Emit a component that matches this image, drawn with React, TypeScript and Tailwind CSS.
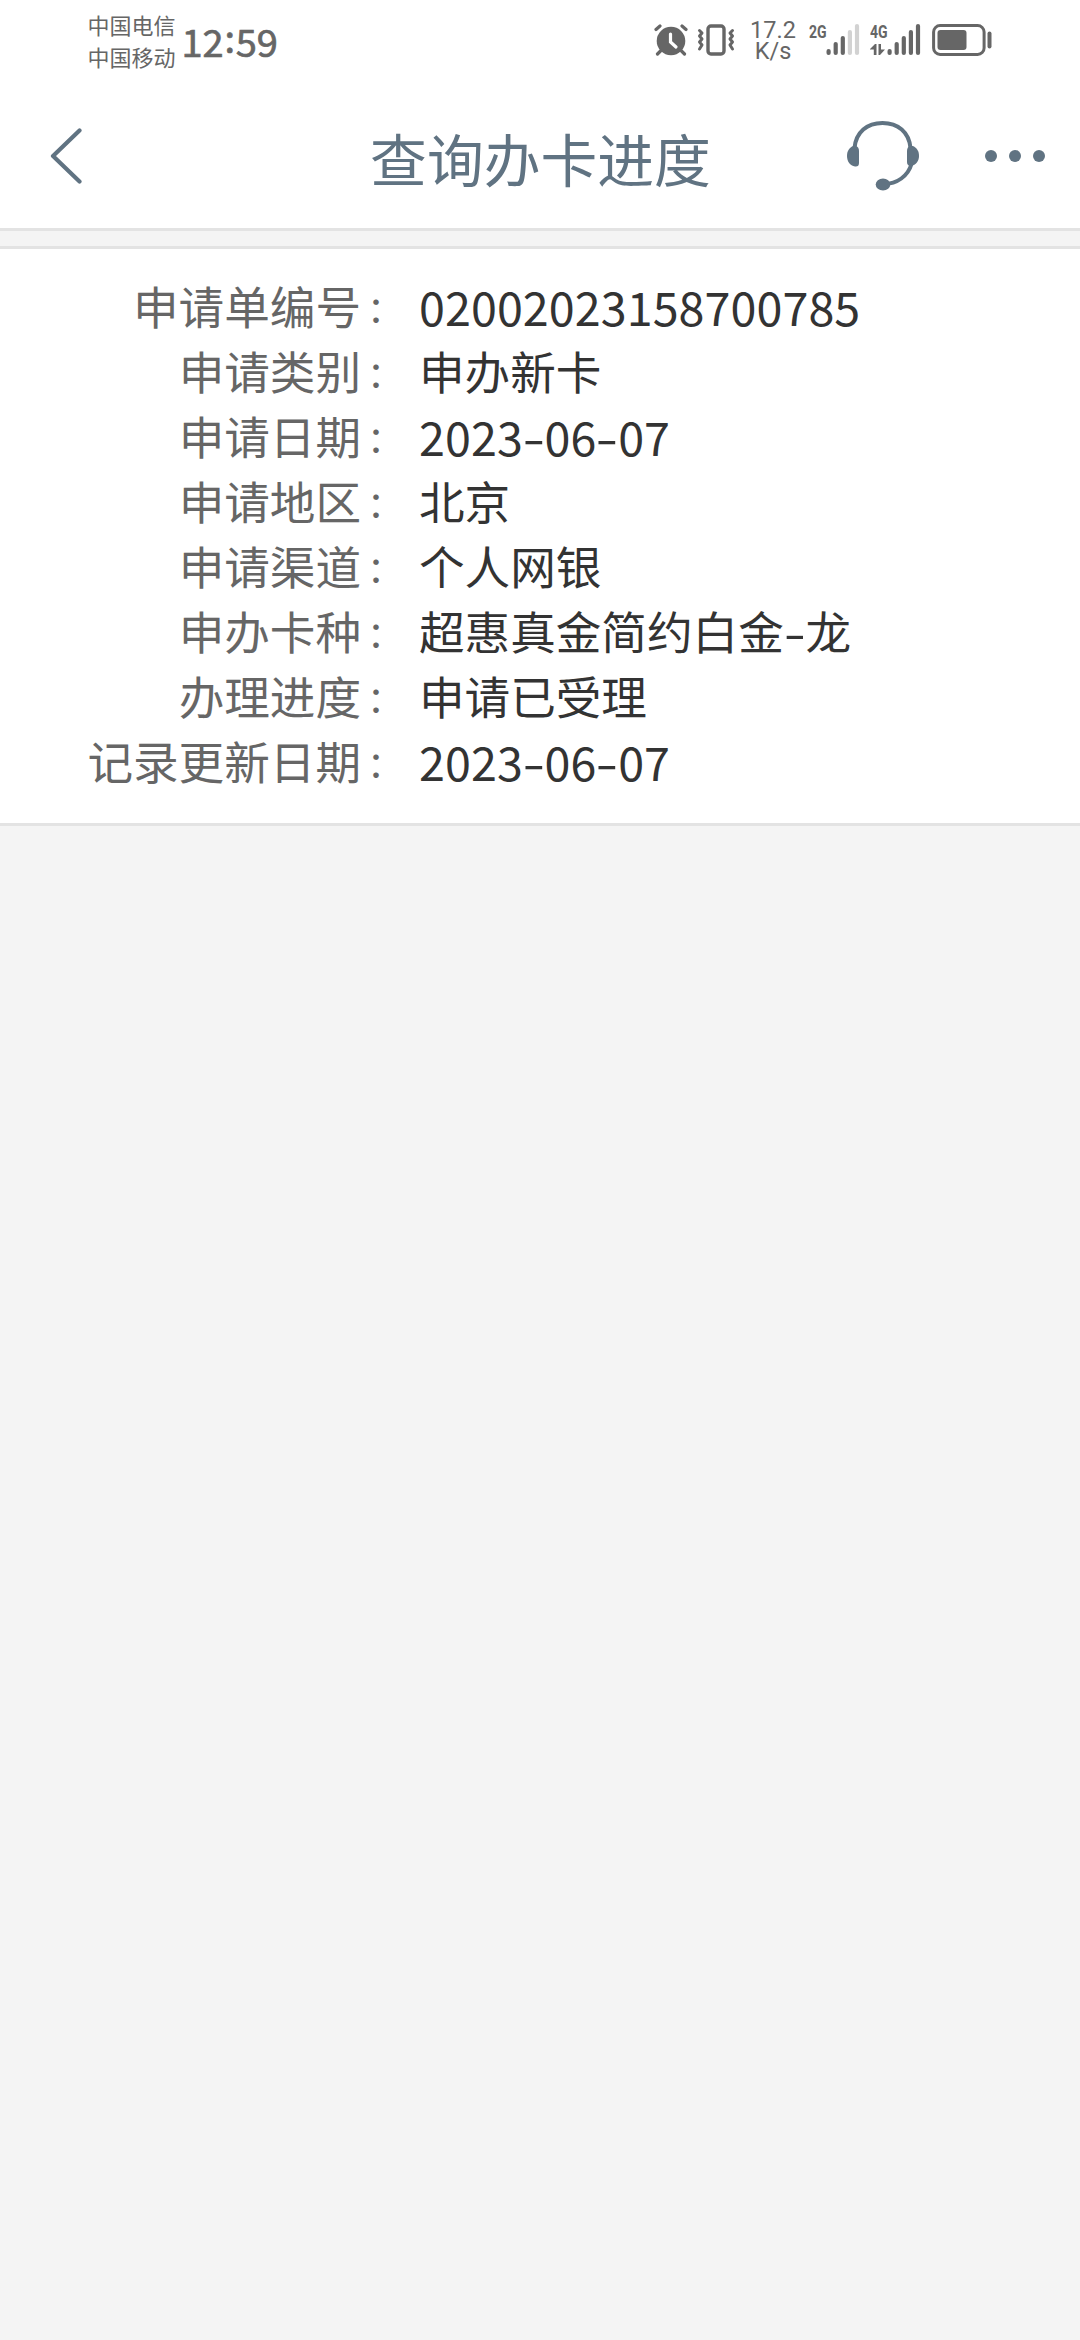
import {Fragment} from "react";

const rows = [
    {label: "申请单编号", value: "02002023158700785"},
    {label: "申请类别", value: "申办新卡"},
    {label: "申请日期", value: "2023-06-07"},
    {label: "申请地区", value: "北京"},
    {label: "申请渠道", value: "个人网银"},
    {label: "申办卡种", value: "超惠真金简约白金-龙"},
    {label: "办理进度", value: "申请已受理"},
    {label: "记录更新日期", value: "2023-06-07"},
];

const AlarmIcon = () => (
    <svg width="34" height="32" viewBox="0 0 34 32" fill="none" strokeLinecap="round">
        <circle cx="17" cy="17" r="14.3" fill="#666"/>
        <path d="M2 5.5L6 2M32 5.5L28 2M6.5 27L3.5 30M27.5 27L30.5 30" stroke="#666" strokeWidth="3.2"/>
        <path d="M16.5 10V18L22 23" stroke="#fff" strokeWidth="3.2"/>
    </svg>
);

const VibrateIcon = () => (
    <svg width="38" height="32" viewBox="0 0 38 32" fill="none" stroke="#666" strokeLinecap="round" strokeLinejoin="round">
        <rect x="11" y="2" width="16" height="28" rx="3" strokeWidth="3.4"/>
        <path d="M2.5 6.5L5 9L2.5 12L5 15L2.5 18L5 21L2.5 25" strokeWidth="3"/>
        <path d="M35.5 6.5L33 9L35.5 12L33 15L35.5 18L33 21L35.5 25" strokeWidth="3"/>
    </svg>
);

const SignalBars = ({active}) => (
    <svg width="34" height="32" viewBox="0 0 34 32">
        {[6, 13, 19, 25, 31].map((h, i) => (
            <rect key={h} x={0.5 + i * 7.1} y={31 - h} width="4.2" height={h} rx="2.1" fill={i < active ? "#666" : "#d2d2d2"}/>
        ))}
    </svg>
);

const BatteryIcon = () => (
    <svg width="61" height="32" viewBox="0 0 61 32">
        <rect x="1.6" y="1.6" width="50.5" height="28.8" rx="6.5" fill="none" stroke="#666" strokeWidth="3"/>
        <rect x="5.5" y="6" width="29" height="20" rx="3" fill="#666"/>
        <rect x="55.5" y="7.5" width="4" height="17" rx="2" fill="#666"/>
    </svg>
);

const StatusBar = () => (
    <div className="flex h-20 text-[#666]">
        <div className="ml-[87.5px] mt-2 w-[88px] text-[22px] leading-8">
            <p>中国电信</p>
            <p>中国移动</p>
        </div>
        <p className="ml-[6px] mt-[13px] flex h-[56px] text-[38px] leading-[56px] [-webkit-text-stroke:0.7px_#666]">
            <span>12</span>
            <span className="relative -top-1 w-[12px] text-center">:</span>
            <span>59</span>
        </p>

        <div className="ml-auto mr-[87px] flex pt-6">
            <AlarmIcon/>
            <div className="ml-[9px]"><VibrateIcon/></div>
            <div className="ml-[12px] -mt-[4px] w-[52px] text-center font-[Roboto] text-[23.5px] leading-[21px]">
                <p>17.2</p>
                <p>K/s</p>
            </div>
            <p className="ml-[10px] h-4 w-[17px] origin-left scale-x-[0.78] font-[Roboto] text-[18px] leading-[15px] font-bold">2G</p>
            <SignalBars active={3}/>
            <div className="ml-[10px] w-[17px]">
                <p className="h-[17px] w-[22px] origin-left scale-x-[0.78] font-[Roboto] text-[18px] leading-[15px] font-bold">4G</p>
                <svg className="mt-[3px]" width="15" height="11" viewBox="0 0 15 11" fill="#666">
                    <path d="M0 5L5 0H6.5V11H3.8V5.5H0ZM8.5 0H11V5.5H15L10 11H8.5Z"/>
                </svg>
            </div>
            <SignalBars active={5}/>
            <div className="ml-[11px]"><BatteryIcon/></div>
        </div>
    </div>
);

const NavBar = () => (
    <div className="flex h-[151px] items-start justify-between border-b-3 border-[#e3e3e3] text-[#607382]">
        <svg className="ml-12 mt-12 w-[240px]" height="56" viewBox="0 0 240 56" fill="none" stroke="currentColor" strokeWidth="4.2" strokeLinecap="round" strokeLinejoin="round">
            <path d="M31.5 2.5L5 28L31.5 53.5"/>
        </svg>
        <h1 className="mt-[35px] text-[56.8px] leading-[84px]">查询办卡进度</h1>
        <div className="mr-[35px] mt-10 flex w-[252px] justify-end">
            <svg width="72" height="72" viewBox="0 0 72 72" fill="none" stroke="currentColor" strokeWidth="4">
                <path d="M7.5 28C9 12 20 3 35.5 3S62 12 63.5 28"/>
                <path d="M64.5 44C61 56 50 64 37 64"/>
                <g fill="currentColor" stroke="none">
                    <path d="M6 26H9Q12 27 12 31V43Q12 47 8 46.5C3 46 0 41 0 36S2 28 6 26Z"/>
                    <path d="M66 26H63Q60 27 60 31V42Q60 46 64 46C69 45 72 41 72 36S70 28 66 26Z"/>
                    <ellipse cx="36" cy="64.5" rx="7.3" ry="6"/>
                </g>
            </svg>
            <svg className="ml-[66px] mt-[30px]" width="60" height="12" viewBox="0 0 60 12" fill="currentColor">
                <circle cx="6" cy="6" r="6"/>
                <circle cx="30" cy="6" r="6"/>
                <circle cx="54" cy="6" r="6"/>
            </svg>
        </div>
    </div>
);

// Digits run slightly larger than the characters, and the dash is drawn wide
const Value = ({text}) => {
    const isNumber = /^[\d-]+$/.test(text);
    return (
        <span className={isNumber ? "text-[46.6px] tracking-[0.1px]" : "text-[45.6px]"}>
            {text.split("-").map((part, i) => (
                <Fragment key={i}>
                    {i > 0 && <span className="inline-block w-[21.7px] scale-x-[1.4] text-center">-</span>}
                    {part}
                </Fragment>
            ))}
        </span>
    );
};

export default function App() {
    return (
        <div className="min-h-[2340px] w-[1080px] bg-[#f4f4f4] font-['Noto_Sans_CJK_SC',sans-serif]">
            <div className="bg-white">
                <StatusBar/>
                <NavBar/>
            </div>
            <div className="mt-[15px] h-[580px] border-y-3 border-[#e3e3e3] bg-white pt-[24px]">
                {rows.map((row) => (
                    <div key={row.label} className="flex h-[65px] leading-[65px] whitespace-nowrap">
                        <p className="w-[361px] text-right text-[45.6px] text-[#666]">{row.label}</p>
                        <p className="relative top-0.5 w-[58px] pl-[6px] text-[36px] text-[#666]">：</p>
                        <p className="text-[#333]"><Value text={row.value}/></p>
                    </div>
                ))}
            </div>
        </div>
    );
}
